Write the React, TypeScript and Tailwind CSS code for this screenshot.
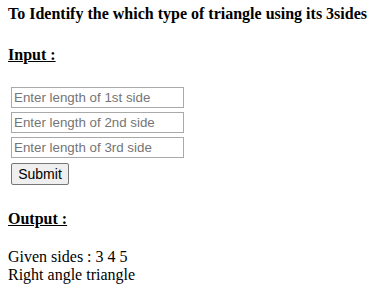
export default function App() {
  const sides = ["1st", "2nd", "3rd"];
  return (
    <div className="min-h-screen bg-white px-2 pt-[5px] text-black font-['Liberation_Serif',serif] text-[16px]">
      <div className="font-bold leading-[18px]">To Identify the which type of triangle using its 3sides</div>
      <div className="mt-[23px] font-bold underline leading-[18px]">Input :</div>

      <div className="mt-[23px] ml-[3px] flex flex-col gap-[4px] font-['Liberation_Sans',Arial,sans-serif] text-[13px]">
        {sides.map((s) => (
          <input
            key={s}
            type="text"
            placeholder={`Enter length of ${s} side`}
            className="w-[173px] h-[21px] border border-[#a9a9a9] px-[2px] py-[1px] text-[13.33px] placeholder:text-[#757575] outline-none"
          />
        ))}
        <div className="pt-[1px]">
          <button className="h-[22px] w-[58px] border border-[#767676] rounded-[2px] bg-[#efefef] text-[14px] leading-none">
            Submit
          </button>
        </div>
      </div>

      <div className="mt-[25px] font-bold underline leading-[18px]">Output :</div>
      <div className="mt-[20px] leading-[18px]">
        <div>Given sides : 3 4 5</div>
        <div>Right angle triangle</div>
      </div>
    </div>
  );
}
